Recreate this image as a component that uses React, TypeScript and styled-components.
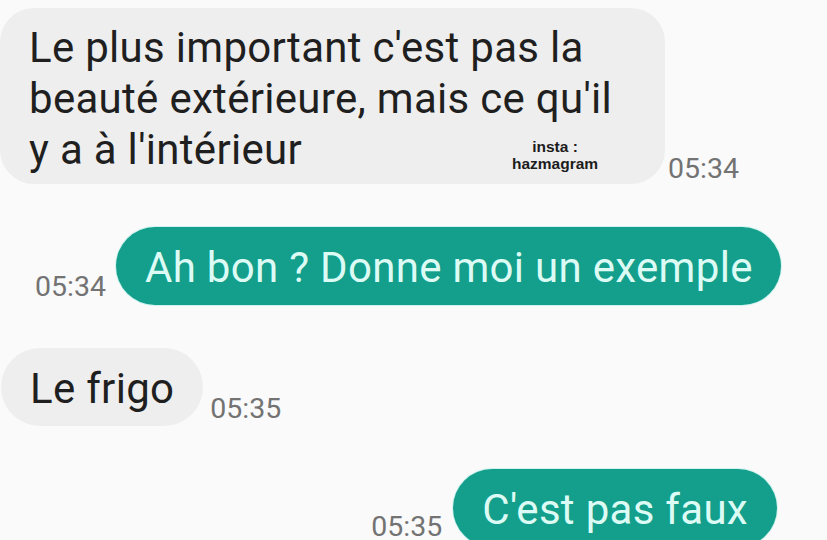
import React from "react";
import styled, { createGlobalStyle } from "styled-components";

const Global = createGlobalStyle`
  html, body { margin: 0; padding: 0; background: #fafafa; }
  body { font-family: Roboto, "Noto Sans", "Liberation Sans", sans-serif; }
`;

const Screen = styled.div`
  width: 827px;
  height: 540px;
  overflow: hidden;
  background: #fafafa;
  display: flex;
  flex-direction: column;
  padding-top: 2px;
  box-sizing: border-box;
`;

const TopRule = styled.div`
  height: 1px;
  background: #ececec;
  margin-bottom: 6px;
`;

const Thread = styled.div`
  display: flex;
  flex-direction: column;
  gap: 43px;
`;

const Row = styled.div<{ $out?: boolean; $inset: number }>`
  display: flex;
  align-items: flex-end;
  justify-content: ${(p) => (p.$out ? "flex-end" : "flex-start")};
  padding-left: ${(p) => (p.$out ? 0 : p.$inset)}px;
  padding-right: ${(p) => (p.$out ? p.$inset : 0)}px;
`;

const Bubble = styled.div<{ $out?: boolean; $multi?: boolean }>`
  position: relative;
  box-sizing: border-box;
  max-width: 665px;
  font-size: 42px;
  letter-spacing: 0.3px;
  line-height: ${(p) => (p.$multi ? "51px" : "48px")};
  padding: ${(p) => (p.$multi ? "14px 29px 9px" : "17px 29px 13px")};
  border-radius: ${(p) => (p.$multi ? "34px" : "40px")};
  background: ${(p) => (p.$out ? "#139f8b" : "#eeeeee")};
  color: ${(p) => (p.$out ? "#ddfbf5" : "#1f1f1f")};
  box-shadow: ${(p) => (p.$out ? "0 0 0 1px rgba(160, 236, 226, 0.45)" : "none")};
  white-space: ${(p) => (p.$multi ? "normal" : "nowrap")};
`;

const Time = styled.span<{ $gap: number; $drop: number; $before?: boolean }>`
  font-size: 28.5px;
  line-height: 28px;
  color: #737373;
  margin-left: ${(p) => (p.$before ? 0 : p.$gap)}px;
  margin-right: ${(p) => (p.$before ? p.$gap : 0)}px;
  margin-bottom: ${(p) => p.$drop}px;
  white-space: nowrap;
`;

const Watermark = styled.div`
  position: absolute;
  left: 505px;
  top: 130px;
  width: 100px;
  text-align: center;
  font-family: "Liberation Sans", Arial, sans-serif;
  font-weight: bold;
  font-size: 15.5px;
  line-height: 17px;
  letter-spacing: 0;
  color: #1c1c1c;
`;

export default function App() {
  return (
    <>
      <Global />
      <Screen>
        <TopRule />
        <Thread>
          <Row $inset={0}>
            <Bubble $multi>
              Le plus important c'est pas la beauté extérieure, mais ce qu'il y a à l'intérieur
              <Watermark>
                insta :
                <br />
                hazmagram
              </Watermark>
            </Bubble>
            <Time $gap={3} $drop={1}>05:34</Time>
          </Row>
          <Row $out $inset={46}>
            <Time $before $gap={10} $drop={4}>05:34</Time>
            <Bubble $out>Ah bon ? Donne moi un exemple</Bubble>
          </Row>
          <Row $inset={1}>
            <Bubble>Le frigo</Bubble>
            <Time $gap={7} $drop={3}>05:35</Time>
          </Row>
          <Row $out $inset={50}>
            <Time $before $gap={11} $drop={6}>05:35</Time>
            <Bubble $out>C'est pas faux</Bubble>
          </Row>
        </Thread>
      </Screen>
    </>
  );
}
